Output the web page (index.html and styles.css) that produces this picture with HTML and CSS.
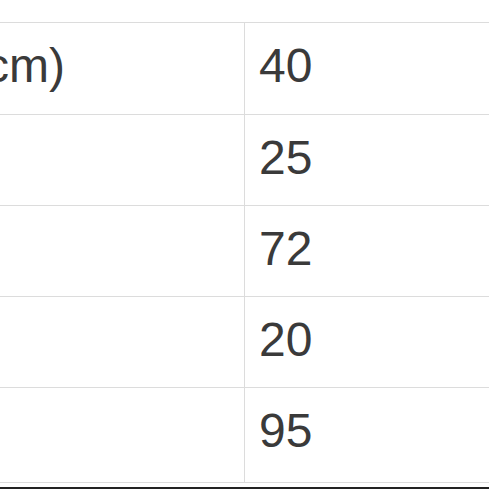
FILE: index.html
```html
<!DOCTYPE html>
<html>
<head>
<meta charset="utf-8">
<link rel="stylesheet" href="styles.css">
</head>
<body>
<div class="sheet">
  <table class="sizes">
    <colgroup><col class="c-label"><col class="c-value"></colgroup>
    <tr class="first"><td>Width (cm)</td><td>40</td></tr>
    <tr><td>Sleeve</td><td>25</td></tr>
    <tr><td>Length</td><td>72</td></tr>
    <tr><td>Cuff</td><td>20</td></tr>
    <tr class="last"><td>Chest</td><td>95</td></tr>
  </table>
  <div class="bar"></div>
</div>
</body>
</html>
```
FILE: styles.css
```css
html, body {
  margin: 0;
  padding: 0;
  background: #fff;
  overflow: hidden;
}
.sheet {
  padding-top: 22px;
  margin-left: -182px;
  width: 900px;
}
.sizes {
  border-collapse: collapse;
  table-layout: fixed;
  width: 826px;
  font-family: "Liberation Sans", Arial, sans-serif;
  font-size: 48px;
  color: #3a3a3a;
}
.c-label { width: 426px; }
.c-value { width: 400px; }
.sizes td {
  border: 1px solid #dcdcdc;
  height: 91px;
  box-sizing: border-box;
  padding: 15px 14px 0;
  line-height: 56px;
  vertical-align: top;
  white-space: nowrap;
}
.sizes tr.first td { height: 92px; }
.sizes tr.last td { height: 95px; }
.bar {
  margin-top: 4px;
  height: 3px;
  background: #222;
}
```
